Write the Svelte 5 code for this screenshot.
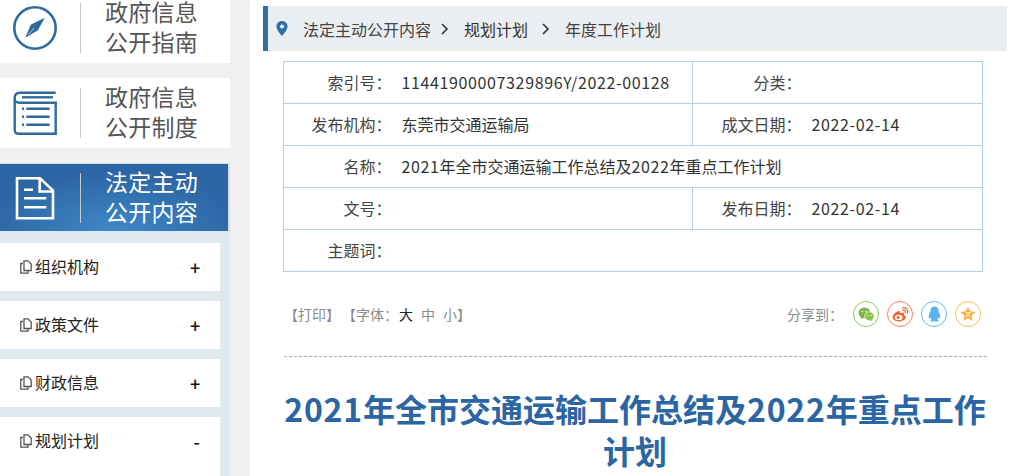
<script>
  const topItems = [
    { lines: ['政府信息', '公开指南'], icon: 'compass' },
    { lines: ['政府信息', '公开制度'], icon: 'book' },
    { lines: ['法定主动', '公开内容'], icon: 'doc', active: true }
  ];
  const subItems = [
    { name: '组织机构', sign: '+' },
    { name: '政策文件', sign: '+' },
    { name: '财政信息', sign: '+' },
    { name: '规划计划', sign: '-' }
  ];
</script>

<div class="page">
  <aside class="side">
    {#each topItems as item}
      <div class="top-item" class:active={item.active}>
        <div class="top-icon">
          {#if item.icon === 'compass'}
            <svg width="46" height="46" viewBox="0 0 46 46">
              <circle cx="23" cy="23" r="20.7" fill="none" stroke="#2f6a9f" stroke-width="2.6" />
              <path d="M32.7 12.7 L26 25.3 L13.3 32.7 L18.7 19.7 Z" fill="#2f6a9f" />
              <path d="M16.5 29.5 L22 23" stroke="#cfe0ee" stroke-width=".8" />
            </svg>
          {:else if item.icon === 'book'}
            <svg width="44" height="44" viewBox="0 0 44 44" fill="none" stroke="#2f6a9f" stroke-width="2.4">
              <path d="M42.7 1.7 H7 C3 1.7 1.7 4 1.7 7 V38 C1.7 41 3 42.7 5 42.7 H42.7 V11.7 H7 C3.5 11.7 1.7 10 1.7 8" />
              <path d="M9 6.3 H40" />
              <path d="M14.3 17.7 H35.7 M14.3 25.7 H35.7 M14.3 33.7 H35.7" stroke-linecap="round" />
              <path d="M9 17.7 H11 M9 25.7 H11 M9 33.7 H11" />
            </svg>
          {:else}
            <svg width="40" height="44" viewBox="0 0 40 44" fill="none" stroke="#fff" stroke-width="2.6">
              <path d="M2 2.2 H25 L38 14.5 V42.2 H2 Z" />
              <path d="M24.7 2.2 V15.5 H38" />
              <path d="M9 13.8 H18 M9 22.2 H31.3 M9 31.2 H31.3" />
            </svg>
          {/if}
        </div>
        <div class="top-label">
          {#each item.lines as line}
            <div>{line}</div>
          {/each}
        </div>
      </div>
    {/each}

    <div class="sub-list">
      {#each subItems as sub}
        <div class="sub-item">
          <svg class="copy" width="12" height="14" viewBox="0 0 12 14" fill="none" stroke="#555" stroke-width="1.3">
            <path d="M4 .8 H8 L11.2 4 V10.5 H4 Z" />
            <path d="M2.9 3.5 H.8 V13.2 H8 V11" />
          </svg>
          <span class="sub-name">{sub.name}</span>
          <span class="sign">{sub.sign}</span>
        </div>
      {/each}
    </div>
  </aside>

  <main class="main">
    <div class="crumbs">
      <svg class="pin" width="12" height="15" viewBox="0 0 12 15">
        <path fill-rule="evenodd" d="M6 0 C9.3 0 11.5 2.4 11.5 5.5 C11.5 9 8 12.5 6 15 C4 12.5 .5 9 .5 5.5 C.5 2.4 2.7 0 6 0 Z M6 3.5 A2 2 0 1 0 6 7.5 A2 2 0 1 0 6 3.5 Z" fill="#2f6fa3" />
      </svg>
      <span class="crumb-a">法定主动公开内容</span>
      <svg class="chev" width="8" height="12" viewBox="0 0 8 12" fill="none" stroke="#333" stroke-width="1.6"><path d="M1 1 L6 6 L1 11" /></svg>
      <span class="crumb-b">规划计划</span>
      <svg class="chev" width="8" height="12" viewBox="0 0 8 12" fill="none" stroke="#333" stroke-width="1.6"><path d="M1 1 L6 6 L1 11" /></svg>
      <span class="crumb-c">年度工作计划</span>
    </div>

    <table class="meta">
      <colgroup>
        <col class="c1" /><col class="c2" /><col class="c3" /><col />
      </colgroup>
      <tbody>
        <tr>
          <th>索引号：</th><td class="num">11441900007329896Y/2022-00128</td>
          <th>分类：</th><td></td>
        </tr>
        <tr>
          <th>发布机构：</th><td>东莞市交通运输局</td>
          <th>成文日期：</th><td class="num">2022-02-14</td>
        </tr>
        <tr>
          <th>名称：</th><td colspan="3"><span class="num">2021</span>年全市交通运输工作总结及<span class="num">2022</span>年重点工作计划</td>
        </tr>
        <tr>
          <th>文号：</th><td></td>
          <th>发布日期：</th><td class="num">2022-02-14</td>
        </tr>
        <tr>
          <th>主题词：</th><td colspan="3"></td>
        </tr>
      </tbody>
    </table>

    <div class="tools">
      <div class="tools-left">
        <span>【打印】</span>
        <span class="font-size">【字体：<b>大</b><i>中</i><i>小</i>】</span>
      </div>
      <div class="share">
        <span class="share-label">分享到：</span>
        <span class="round wechat">
          <svg width="17" height="15" viewBox="0 0 20 18">
            <ellipse cx="7.5" cy="7" rx="7" ry="6.4" fill="#7cb342" />
            <path d="M3.5 11 L3 15 L7 12 Z" fill="#7cb342" />
            <ellipse cx="13.5" cy="11" rx="5.8" ry="5.2" fill="#8bc34a" stroke="#fff" stroke-width=".8" />
            <path d="M16 14.5 L17 17.5 L13.5 15.5 Z" fill="#8bc34a" />
            <circle cx="5" cy="5.5" r="1" fill="#fff" /><circle cx="9.5" cy="5.5" r="1" fill="#fff" />
            <circle cx="11.5" cy="10" r=".8" fill="#fff" /><circle cx="15.5" cy="10" r=".8" fill="#fff" />
          </svg>
        </span>
        <span class="round weibo">
          <svg width="19" height="16" viewBox="0 0 20 18">
            <path d="M8 5.5 C3.5 7 1 10 1 12.5 C1 15.5 4.5 17.5 8.5 17.5 C12.5 17.5 16 15 16 12.5 C16 10.8 14.5 10.5 13.8 10 C14.5 8 13.5 6.8 11 7.5 L9 8 C9.5 5.5 9 5 8 5.5 Z" fill="#f4622f" />
            <ellipse cx="7.8" cy="12.8" rx="4.4" ry="3" fill="#fff" />
            <circle cx="7.3" cy="13" r="1.7" fill="#f4622f" />
            <path d="M12.5 2 C16 1.2 19 4 18 8 M12.8 4.6 C14.6 4.2 16 5.6 15.5 7.4" fill="none" stroke="#f4622f" stroke-width="1.5" stroke-linecap="round" />
          </svg>
        </span>
        <span class="round qq">
          <svg width="13" height="16" viewBox="0 0 16 20">
            <path d="M8 .5 C12 .5 13.2 3.5 13.2 7 C14.5 9.5 15.8 12.5 15 15 C14 15.8 13.5 14.8 13 14 C12.8 15.5 12.2 16.3 11.6 16.8 C13 17.5 13.4 18.2 12.6 19 C11 19.8 9 19.4 8 18.6 C7 19.4 5 19.8 3.4 19 C2.6 18.2 3 17.5 4.4 16.8 C3.8 16.3 3.2 15.5 3 14 C2.5 14.8 2 15.8 1 15 C.2 12.5 1.5 9.5 2.8 7 C2.8 3.5 4 .5 8 .5 Z" fill="#55b5ec" />
          </svg>
        </span>
        <span class="round star">
          <svg width="16" height="16" viewBox="0 0 18 18">
            <path d="M9 .8 L11.5 6 L17.3 6.8 L13.1 10.8 L14.1 16.6 L9 13.8 L3.9 16.6 L4.9 10.8 L.7 6.8 L6.5 6 Z" fill="#fbb03b" />
            <path d="M6.5 7.5 H11.5 L6.5 11.5 H11.5" fill="none" stroke="#fde3b8" stroke-width="1.4" />
          </svg>
        </span>
      </div>
    </div>

    <h1 class="title"><span class="digits">2021</span>年全市交通运输工作总结及<span class="digits">2022</span>年重点工作计划</h1>
  </main>
</div>

<style>
  :global(body) {
    margin: 0;
    background: #fff;
    overflow: hidden;
  }

  .page {
    display: flex;
    height: 476px;
    overflow: hidden;
    font-family: "Noto Sans CJK SC", "Liberation Sans", sans-serif;
    color: #333;
  }

  /* left column */
  .side {
    flex: 0 0 250px;
    box-sizing: border-box;
    padding-right: 20px;
    background: #f0f0f0;
    margin-top: -7px;
  }

  .top-item {
    display: flex;
    align-items: center;
    height: 70px;
    margin-bottom: 15px;
    background: #fff;
  }

  .top-item.active {
    box-sizing: border-box;
    margin-bottom: 0;
    padding-top: 1px;
    color: #fff;
    background: radial-gradient(ellipse 130px 60px at 50% 100%, #3f88c9, #2c65a3);
    border-top: 1px solid #d5dee6;
    border-right: 2px solid #d5dee6;
    border-bottom: 2px solid #dfe9ee;
  }

  .top-icon {
    flex: 0 0 81px;
    height: 50px;
    box-sizing: border-box;
    display: flex;
    align-items: center;
    justify-content: center;
    padding-right: 11px;
    border-right: 1px solid #c9c9c9;
  }

  .top-label {
    margin: -4px 0 0 24px;
    font-size: 23px;
    line-height: 30px;
    letter-spacing: .25px;
    color: #555;
  }

  .active .top-label {
    color: #fff;
  }

  .sub-list {
    background: #dfe9ee;
    padding: 10px 10px 0 0;
  }

  .sub-item {
    display: flex;
    align-items: center;
    height: 48px;
    margin-bottom: 10px;
    padding: 0 20px;
    background: #fff;
    font-size: 16px;
    color: #222;
  }

  .sub-item:last-child {
    box-sizing: border-box;
    height: 90px;
    padding-bottom: 42px;
  }

  .sub-name {
    margin-left: 3px;
    padding-bottom: 2px;
    flex: 1;
  }

  .sign {
    width: 10px;
    font-size: 18px;
    font-weight: 500;
    color: #111;
    text-align: right;
  }

  /* content */
  .main {
    flex: 1;
    min-width: 0;
    padding: 6px 3px 0 13px;
  }

  .crumbs {
    display: flex;
    align-items: center;
    height: 45px;
    border-left: 5px solid #2f6fa3;
    background: #ebeef1;
    padding-left: 8px;
    font-size: 16px;
    color: #444;
  }

  .pin {
    margin-right: 15px;
  }

  .chev {
    margin: 0 15px 0 10px;
  }

  .crumb-b {
    margin-right: 4px;
    color: #333;
  }

  .meta {
    width: 700px;
    margin: 10px 0 0 20px;
    border-collapse: collapse;
    table-layout: fixed;
    font-size: 16px;
    color: #444;
  }

  .c1 { width: 109px; }
  .c2 { width: 300px; }
  .c3 { width: 110px; }

  .meta th, .meta td {
    height: 42px;
    padding: 0 0 2px;
    box-sizing: border-box;
    border-top: 1px solid #b3cfe3;
    border-bottom: 1px solid #b3cfe3;
    font-weight: 400;
  }

  .meta th {
    text-align: right;
    padding-right: 1px;
    border-left: 1px solid #b3cfe3;
  }

  .meta td {
    padding-left: 9px;
    color: #333;
  }

  .meta td:last-child {
    border-right: 1px solid #b3cfe3;
  }

  .num {
    letter-spacing: .63px;
  }

  .tools {
    display: flex;
    justify-content: space-between;
    align-items: center;
    margin-left: 21px;
    width: 703px;
    height: 84px;
    border-bottom: 1px dashed #b0b0b0;
    font-size: 14px;
    color: #8a8a8a;
  }

  .tools-left {
    display: flex;
  }

  .font-size {
    margin-left: 2px;
  }

  .font-size b {
    font-weight: 400;
    color: #222;
    margin: 0 8px 0 1px;
  }

  .font-size i {
    font-style: normal;
    margin-right: 8px;
  }

  .font-size i:last-of-type {
    margin-right: 0;
  }

  .share {
    display: flex;
    align-items: center;
    gap: 8px;
    padding-right: 6px;
  }

  .share-label {
    margin-right: 2px;
  }

  .round {
    display: flex;
    align-items: center;
    justify-content: center;
    width: 24px;
    height: 24px;
    border: 1px solid;
    border-radius: 50%;
  }

  .wechat { border-color: #8cc965; }
  .weibo { border-color: #f58255; }
  .qq { border-color: #62b9ee; }
  .star { border-color: #fbc153; }

  .title {
    margin: 30px 0 0 20px;
    width: 704px;
    font-size: 32px;
    line-height: 42px;
    font-weight: 700;
    text-align: center;
    color: #2c65a3;
  }

  .digits {
    letter-spacing: .8px;
  }
</style>
